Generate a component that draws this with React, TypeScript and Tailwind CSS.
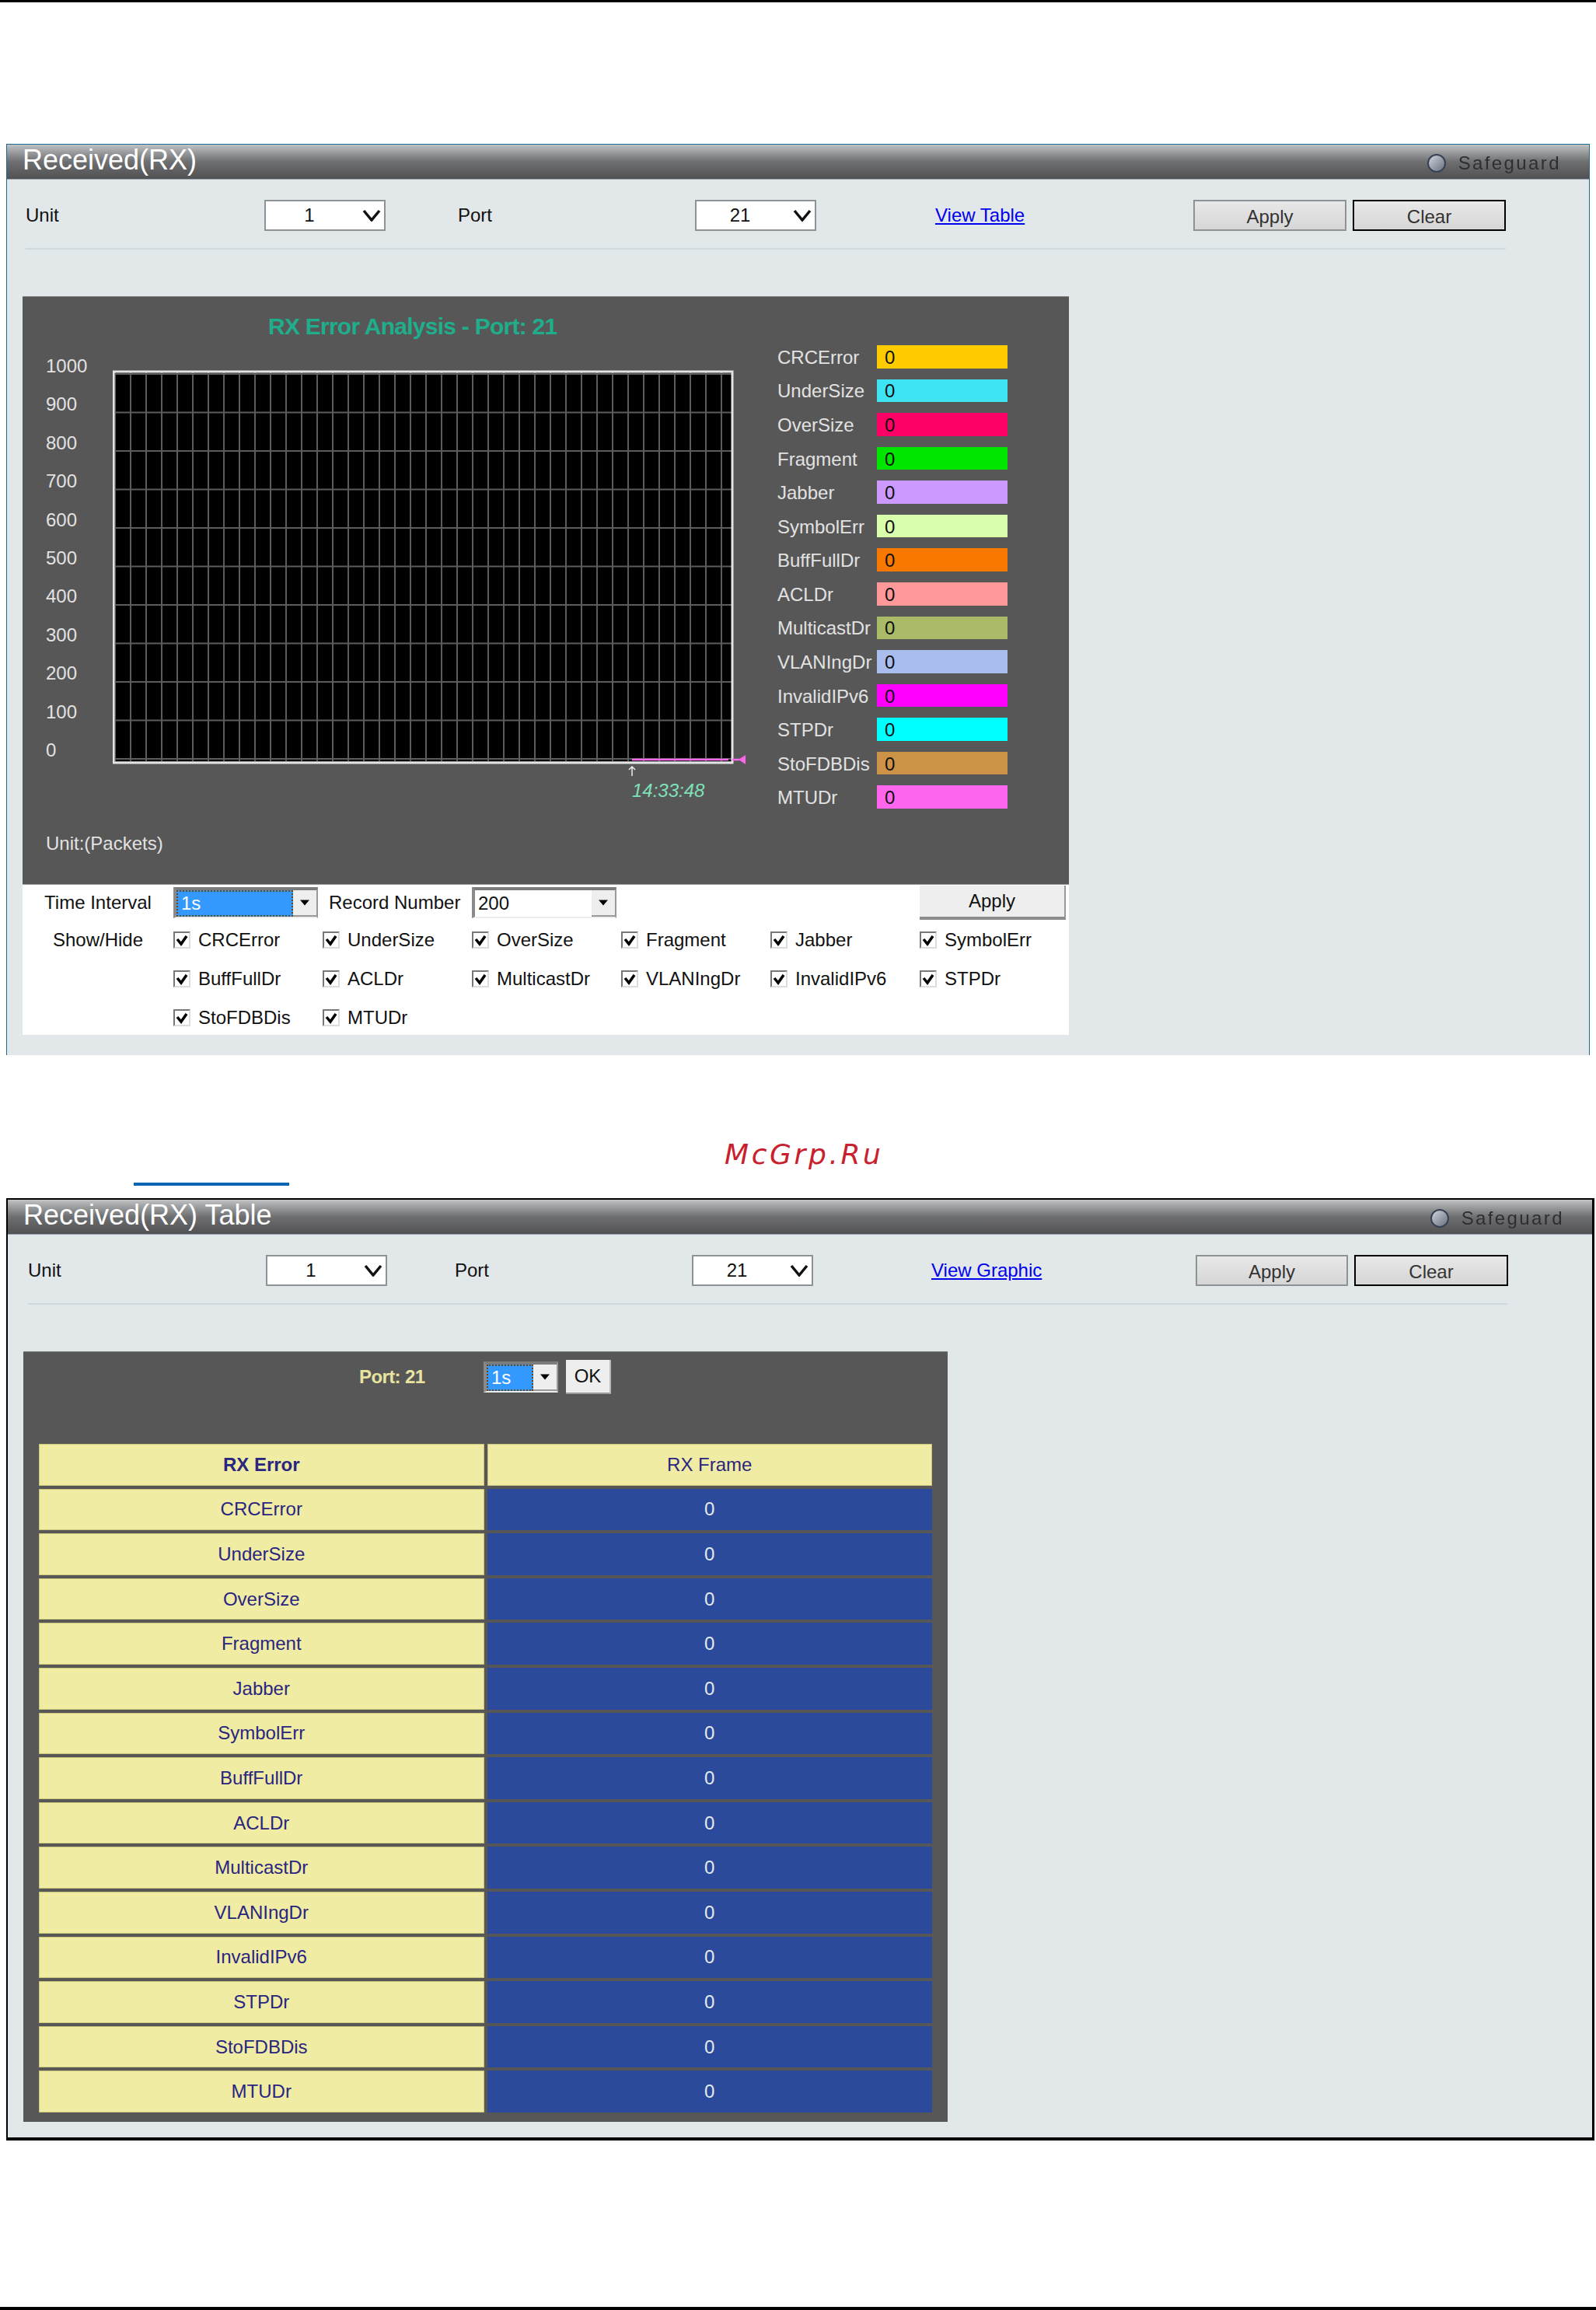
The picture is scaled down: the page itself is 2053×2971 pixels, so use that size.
const errors = ["CRCError", "UnderSize", "OverSize", "Fragment", "Jabber", "SymbolErr", "BuffFullDr", "ACLDr", "MulticastDr", "VLANIngDr", "InvalidIPv6", "STPDr", "StoFDBDis", "MTUDr"];

const legendColors = ["bg-[#ffcc00]", "bg-[#3ee4f4]", "bg-[#ff0066]", "bg-[#00e600]", "bg-[#cc99ff]", "bg-[#d9ffad]", "bg-[#f87800]", "bg-[#ff9999]", "bg-[#a9bb66]", "bg-[#a9bdef]", "bg-[#ff00ff]", "bg-[#00ffff]", "bg-[#cc9245]", "bg-[#ff66ee]"];

const yLabels = ["1000", "900", "800", "700", "600", "500", "400", "300", "200", "100", "0"];

function TitleBar({ title, pad }: { title: string; pad: string }) {
  return (
    <div className={`flex h-11 box-content items-center justify-between border-b border-gray-400 bg-linear-to-b from-[#c0c2c4] via-[#6e6f71] to-[#515153] pr-9 ${pad}`}>
      <h1 className="pb-1 text-4xl leading-none text-white">{title}</h1>
      <div className="flex items-center gap-4 pt-1">
        <span className="size-6 rounded-full border-2 border-gray-700 bg-linear-to-br from-gray-300 to-gray-500" />
        <span className="text-2xl leading-none tracking-widest text-[#2e2e2e] blur-[0.5px]">Safeguard</span>
      </div>
    </div>
  );
}

function DropSelect({ value }: { value: string }) {
  return (
    <div className="flex h-10 w-39 items-center border-2 border-[#8d9294] bg-white text-2xl">
      <span className="w-28 text-center">{value}</span>
      <svg viewBox="0 0 24 16" className="ml-3 h-4 w-6" fill="none" stroke="#111" strokeWidth="3.5">
        <path d="M2 2 L12 14 L22 2" />
      </svg>
    </div>
  );
}

function PushButton({ label, focused }: { label: string; focused?: boolean }) {
  return (
    <button
      type="button"
      className={`h-10 w-full border-2 bg-linear-to-b from-[#e8e8e8] to-[#d6d6d6] pt-1 text-2xl leading-none text-[#333] ${focused ? "border-black" : "border-[#8d9294]"}`}
    >
      {label}
    </button>
  );
}

function Toolbar({ cols, pad, link, width }: { cols: string; pad: string; link: string; width: string }) {
  return (
    <div className={`pt-6.5 ${pad}`}>
      <div className={`grid items-center text-2xl text-[#111] ${cols}`}>
        <span>Unit</span>
        <DropSelect value="1" />
        <span>Port</span>
        <DropSelect value="21" />
        <a href="#" className="text-[#0000ee] underline">{link}</a>
        <div className="pr-2">
          <PushButton label="Apply" />
        </div>
        <PushButton label="Clear" focused />
      </div>
      <div className={`mt-5.5 h-0.5 bg-[#ccd9da] ${width}`} />
    </div>
  );
}

// the old sunken list box with a dotted focus ring
function ListBox({ value, width, active }: { value: string; width: string; active?: boolean }) {
  return (
    <div className={`flex h-10 items-stretch border-t-4 border-r-2 border-b-2 border-l-4 border-t-[#7c7c7c] border-r-[#999] border-b-[#eee] border-l-[#8a8a8a] bg-white text-2xl ${width}`}>
      <span className={`flex flex-1 items-center pl-1 ${active ? "border-2 border-dotted border-[#6b4a12] bg-[#3399ff] text-white" : "text-[#111]"}`}>
        {value}
      </span>
      <span className="flex w-7.5 items-center justify-center border-b-2 border-b-[#999] bg-[#eee]">
        <svg viewBox="0 0 12 7" className="h-2 w-3"><path d="M0 0 H12 L6 7 Z" fill="#000" /></svg>
      </span>
    </div>
  );
}

function CheckItem({ label, className }: { label: string; className: string }) {
  return (
    <label className={`flex items-center gap-2.5 text-2xl text-[#111] ${className}`}>
      <span className="size-5.5 border-2 border-t-[#777] border-r-[#ddd] border-b-[#ddd] border-l-[#777] bg-white">
        <svg viewBox="0 0 18 18" fill="none" stroke="#000" strokeWidth="3.5">
          <path d="M3 8 L8 14 L15 4" />
        </svg>
      </span>
      {label}
    </label>
  );
}

function ChartGrid() {
  const cols = Array.from({ length: 40 }, (_, i) => 3 + i * 20);
  const rows = Array.from({ length: 11 }, (_, i) => 5 + i * 49.5);
  return (
    <svg viewBox="0 0 815 525" className="mt-7.5 h-131.25 w-203.75">
      <rect x="2" y="3" width="795" height="500" fill="#000" />
      {cols.map((x) => (
        <line key={x} x1={x} x2={x} y1="3" y2="503" stroke="#5c5c5c" strokeWidth="2" />
      ))}
      {rows.map((y) => (
        <line key={y} x1="2" x2="797" y1={y} y2={y} stroke="#5c5c5c" strokeWidth="2" />
      ))}
      <path d="M1 505 V2 H797 V505 H0" fill="none" stroke="#e4e4e4" strokeWidth="3" />
      <path d="M668 501 H792 M797 501 H806" stroke="#ff66ee" strokeWidth="2.5" />
      <path d="M805 501 L814 495 V507 Z" fill="#ff66ee" />
      <path d="M668 522 V510 M664 514 L668 510 L672 514" fill="none" stroke="#eee" strokeWidth="1.5" />
    </svg>
  );
}

function GraphPanel() {
  return (
    <div className="mt-15 ml-5 w-336.5">
      <div className="flex border-t border-[#777] bg-[#575757]">
        <div className="w-242.75">
          <h2 className="pt-5 pl-79 text-3xl leading-9 font-bold tracking-tight text-[#1fae8c]">RX Error Analysis - Port: 21</h2>
          <div className="mt-2 flex">
            <div className="grid h-136 w-29 grid-rows-11 items-center pl-7.5 text-2xl text-[#e2e2e2]">
              {yLabels.map((l) => (
                <span key={l}>{l}</span>
              ))}
            </div>
            <ChartGrid />
          </div>
          <p className="pl-196 text-2xl leading-8 text-[#7fe0b8] italic">14:33:48</p>
          <p className="mt-9 pb-9 pl-7.5 text-2xl leading-8 text-[#e2e2e2]">Unit:(Packets)</p>
        </div>
        <div className="mt-15.5 grid h-149 grid-cols-[128px_168px] grid-rows-14 gap-y-3.5 text-2xl">
          {errors.map((name, i) => (
            <div key={name} className="contents">
              <span className="self-center pt-0.5 text-[#e2e2e2]">{name}</span>
              <span className={`flex items-center pt-0.5 pl-2.5 text-[#111] ${legendColors[i]}`}>0</span>
            </div>
          ))}
        </div>
      </div>
      <div className="grid h-48.5 grid-cols-[194px_repeat(6,192px)] grid-rows-[46px_repeat(3,50px)] items-center border-t border-[#999] bg-white text-2xl text-[#111]">
        <span className="text-center">Time Interval</span>
        <ListBox value="1s" width="w-46.5" active />
        <span className="pl-2">Record Number</span>
        <ListBox value="200" width="w-46.5" />
        <button type="button" className="col-start-7 h-11 w-47 border-r-2 border-b-4 border-r-[#999] border-b-[#8d8d8d] bg-[#eee]">
          Apply
        </button>
        <span className="text-center">Show/Hide</span>
        {errors.map((name, i) => (
          <CheckItem key={name} label={name} className={i % 6 === 0 ? "col-start-2" : ""} />
        ))}
      </div>
    </div>
  );
}

function TablePanel() {
  const cell = "flex items-center justify-center";
  return (
    <div className="mt-15 ml-5 w-297.25 border-t border-[#777] bg-[#575757] px-5 pb-3">
      <div className="flex h-11 items-center pt-2.5 box-content pl-103">
        <span className="w-40 text-2xl font-bold tracking-tight text-[#e8e4a0]">Port: 21</span>
        <ListBox value="1s" width="w-24" active />
        <button type="button" className="ml-2.5 h-11 w-14.5 border-r-2 border-b-2 border-r-[#bbb] border-b-[#999] bg-[#eee] text-2xl text-[#111]">
          OK
        </button>
      </div>
      <div className="mt-16 grid h-215 grid-cols-2 grid-rows-15 gap-1 text-2xl text-[#2a2580]">
        <div className={`${cell} border border-[#c8c47a] bg-[#f0eca4] font-bold`}>RX Error</div>
        <div className={`${cell} border border-[#c8c47a] bg-[#f0eca4]`}>RX Frame</div>
        {errors.map((name) => (
          <div key={name} className="contents">
            <div className={`${cell} border border-[#c8c47a] bg-[#f0eca4]`}>{name}</div>
            <div className={`${cell} bg-[#2b4a9b] text-[#e4eaec]`}>0</div>
          </div>
        ))}
      </div>
    </div>
  );
}

export default function App() {
  return (
    <div className="flex h-[2971px] flex-col bg-white font-['Liberation_Sans',sans-serif]">
      <div className="h-0.75 bg-black" />

      <section className="mt-45.5 ml-2 w-[2037px] border-x border-t border-[#1a6a9a] bg-[#e2e7ea] pb-6.5">
        <TitleBar title="Received(RX)" pad="pl-5" />
        <Toolbar
          cols="grid-cols-[307px_249px_305px_309px_332px_205px_197px]"
          pad="pl-6"
          link="View Table"
          width="w-[1904px]"
        />
        <GraphPanel />
      </section>

      <p className="pt-27 pl-233 font-['DejaVu_Sans',sans-serif] text-4xl leading-10 tracking-widest text-[#c8202c] italic">McGrp.Ru</p>
      <div className="mt-4 ml-43 h-1 w-50 bg-[#0a64b4]" />

      <section className="mt-4 ml-2 w-[2043px] border-t-2 border-r-3 border-b-4 border-l-2 border-black bg-[#e2e7ea] pb-5">
        <TitleBar title="Received(RX) Table" pad="pl-5" />
        <Toolbar
          cols="grid-cols-[306px_243px_305px_308px_340px_204px_198px]"
          pad="pl-6.5"
          link="View Graphic"
          width="w-[1903px]"
        />
        <TablePanel />
      </section>

      <div className="mt-auto h-1 bg-black" />
    </div>
  );
}
